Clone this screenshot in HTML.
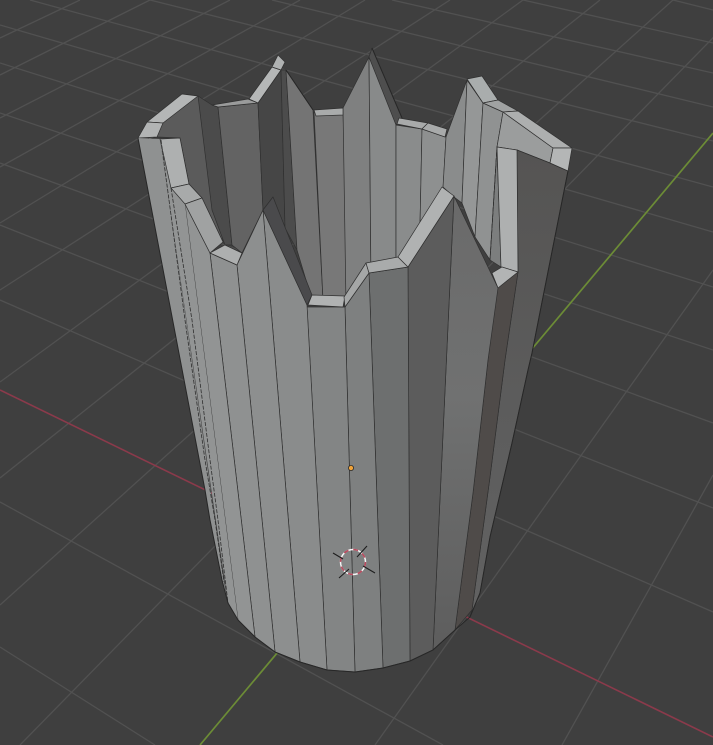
<!DOCTYPE html>
<html>
<head>
<meta charset="utf-8">
<style>
html,body{margin:0;padding:0;background:#3f3f3f;width:713px;height:745px;overflow:hidden}
svg{display:block;filter:blur(.35px)}
</style>
</head>
<body>
<svg width="713" height="745" viewBox="0 0 713 745" xmlns="http://www.w3.org/2000/svg">
<defs>
<linearGradient id="gL" gradientUnits="userSpaceOnUse" x1="0" y1="150" x2="0" y2="620">
<stop offset="0" stop-color="#555453"/><stop offset=".6" stop-color="#5d5d5d"/><stop offset="1" stop-color="#626262"/>
</linearGradient>
<linearGradient id="gJ" gradientUnits="userSpaceOnUse" x1="0" y1="200" x2="0" y2="640">
<stop offset="0" stop-color="#6a6a6a"/><stop offset=".45" stop-color="#707171"/><stop offset="1" stop-color="#5e5e5e"/>
</linearGradient>
</defs>
<rect width="713" height="745" fill="#3f3f3f"/>
<g stroke="#515151" stroke-width="1.3" fill="none">
<path d="M673 0L713 10M523 0L713 43M392 0L713 73M272 0L713 107M150 0L713 141M30 0L713 187M0 25L713 232M0 63L713 287M0 113L713 350M0 163L713 423M0 225L713 508M0 300L713 612M0 502L443 745M0 647L155 745"/>
<path d="M80 0L0 38M150 0L0 75M230 0L0 118M300 0L0 167M365 0L0 223M450 0L0 290M523 0L0 382M600 0L0 478M673 0L0 605M750 0L20 745M713 270L375 745M713 475L562 745"/>
</g>
<path d="M0 390L713 737" stroke="#8b3a4b" stroke-width="1.6" fill="none"/>
<path d="M713 133L200 745" stroke="#6c8c36" stroke-width="1.7" fill="none"/>

<g stroke="#303030" stroke-width=".7" stroke-linejoin="round">
<!-- inner back walls -->
<polygon points="147,140 163,123 182,94 198,96 216,190 223,242 202,198 189,184 180,138 157,137" fill="#5b5b5b"/>
<polygon points="198,96 212,105 218,107 232,245 225,245 212,210" fill="#4b4b4b"/>
<polygon points="218,107 258,103 263,210 242,253 232,245" fill="#636363"/>
<polygon points="258,103 281,70 285,228 273,197 263,210" fill="#464646"/>
<polygon points="281,70 286,70 297,250 285,228" fill="#4c4c4c"/>
<polygon points="286,70 313,110 323,300 312,300 297,250" fill="#747474"/>
<polygon points="314,112 343,110 348,300 323,300" fill="#787878"/>
<polygon points="343,108 369,57 371,285 346,305" fill="#7f8080"/>
<polygon points="369,57 396,122 396,265 371,285" fill="#888a8a"/>
<polygon points="372,48 402,118 396,125 369,57" fill="#4e4e4e"/>
<polygon points="396,125 422,129 420,225 396,262" fill="#8a8c8c"/>
<polygon points="422,129 446,137 443,190 420,225" fill="#8e9090"/>
<polygon points="446,137 467,80 462,203 454,197 443,187" fill="#8a8c8c"/>
<polygon points="467,80 483,103 475,237 462,203" fill="#959797"/>
<polygon points="483,103 503,112 497,147 490,260 475,237" fill="#909292"/>
<polygon points="497,147 501,267 490,260" fill="#7c7e7e"/>
<polygon points="503,112 553,148 550,163 517,150 497,147" fill="#9b9d9d"/>

<!-- back rim tops -->
<polygon points="212,105 248,99 258,103 218,107" fill="#9a9b9b"/>
<polygon points="249,99 272,67 281,70 258,103" fill="#b5b7b7"/>
<polygon points="272,67 278,55 285,62 281,70" fill="#b0b2b2"/>
<polygon points="314,110 343,108 343,115 316,116" fill="#a9abab"/>
<polygon points="399,118 428,123 422,129 397,124" fill="#a8aaaa"/>
<polygon points="428,123 447,129 445,137 422,129" fill="#a8aaaa"/>
<polygon points="467,79 482,76 498,100 483,103" fill="#a9adad"/>
<polygon points="483,103 498,100 518,111 503,112" fill="#a0a2a2"/>
<polygon points="503,112 518,111 572,148 553,148" fill="#adafaf"/>
<polygon points="147,122 182,94 198,96 163,123" fill="#b4b6b6"/>
<polygon points="138,138 147,122 163,123 157,137" fill="#b2b4b4"/>

<!-- right outer faces -->
<polygon points="517,150 550,163 568,171 543,297 532,353 528,370 512,443 490,537 480,593 470,617 472,610 490,477 505,360 518,272" fill="url(#gL)"/>
<polygon points="553,148 572,148 568,171 550,163" fill="#b4b6b6"/>
<polygon points="497,287 518,272 505,360 490,477 472,610 455,630 473,493 488,360" fill="#4f4b49"/>
<polygon points="497,147 517,150 518,272 501,267" fill="#aeb0b0"/>
<polygon points="502,267 518,272 498,288 492,273" fill="#b2b4b4"/>

<!-- front outer faces -->
<polygon points="454,196 498,288 488,360 473,493 455,630 433,650" fill="url(#gJ)"/>
<polygon points="408,267 454,196 433,650 410,661" fill="#5c5c5c"/>
<polygon points="369,273 408,267 410,661 383,668" fill="#6d6f6f"/>
<polygon points="345,307 369,273 383,668 355,672" fill="#7e8080"/>
<polygon points="307,307 345,307 355,672 327,670" fill="#838585"/>
<polygon points="263,210 307,305 327,670 300,662" fill="#8a8c8c"/>
<polygon points="237,265 263,210 300,662 275,652" fill="#8d8f8f"/>
<polygon points="210,253 237,265 275,652 255,637" fill="#8f9191"/>
<polygon points="185,204 210,253 255,637 238,620" fill="#929494"/>
<polygon points="160,139 171,188 185,204 238,620 228,603" fill="#929494" stroke="none"/>
<polygon points="138,138 160,139 224,582 228,603 222,580 210,520 205,490" fill="#8f9191" stroke="none"/>

<!-- underside of front spire -->
<polygon points="263,210 273,197 312,295 307,305" fill="#4a4a4c"/>

<!-- front rim tops -->
<polygon points="160,139 180,138 189,184 171,188" fill="#aeb0b0"/>
<polygon points="171,188 189,184 202,198 185,204" fill="#a8aaaa"/>
<polygon points="185,204 202,198 223,242 210,253" fill="#a0a2a2"/>
<polygon points="210,253 225,245 242,253 237,265" fill="#adafaf"/>
<polygon points="308,305 312,295 345,296 343,307" fill="#b0b2b2"/>
<polygon points="344,297 366,263 369,273 345,307" fill="#a5a7a7"/>
<polygon points="366,263 398,257 408,267 369,273" fill="#a9abab"/>
<polygon points="398,257 442,187 454,196 408,267" fill="#b0b2b2"/>
</g>

<g fill="none" stroke="#303030" stroke-width=".8">
<path d="M161 140L185 320L205 460L215 520L224 582" stroke-dasharray="4 1.5"/>
<path d="M171 188L192 320L210 460L218 520L228 603" stroke-dasharray="4 1.5"/>
<path d="M497 147L490 260" stroke-dasharray="4 1.5"/>
</g>
<path d="M372 48L402 118M286 70L313 110M138 138L205 490L210 520L222 580L228 603L238 620L255 637L275 652L300 662L327 670L355 672L383 668L410 661L433 650L455 630L470 617L480 593L490 537L512 443L528 370L532 353L543 297L568 171" fill="none" stroke="#272727" stroke-width="1"/>

<!-- origin -->
<circle cx="351" cy="468" r="2.6" fill="#f0a33a" stroke="#2a2a2a" stroke-width=".8"/>

<!-- 3D cursor -->
<g fill="none">
<circle cx="353" cy="562" r="12.5" stroke="#f4f4f4" stroke-width="1.5"/>
<circle cx="353" cy="562" r="12.5" stroke="#b94a5e" stroke-width="1.6" stroke-dasharray="4.9 4.9"/>
<path d="M333 553L343 559M367 546L357 557M375 573L363 566M339 578L349 569" stroke="#1e1e1e" stroke-width="1.1"/>
</g>
</svg>
</body>
</html>
